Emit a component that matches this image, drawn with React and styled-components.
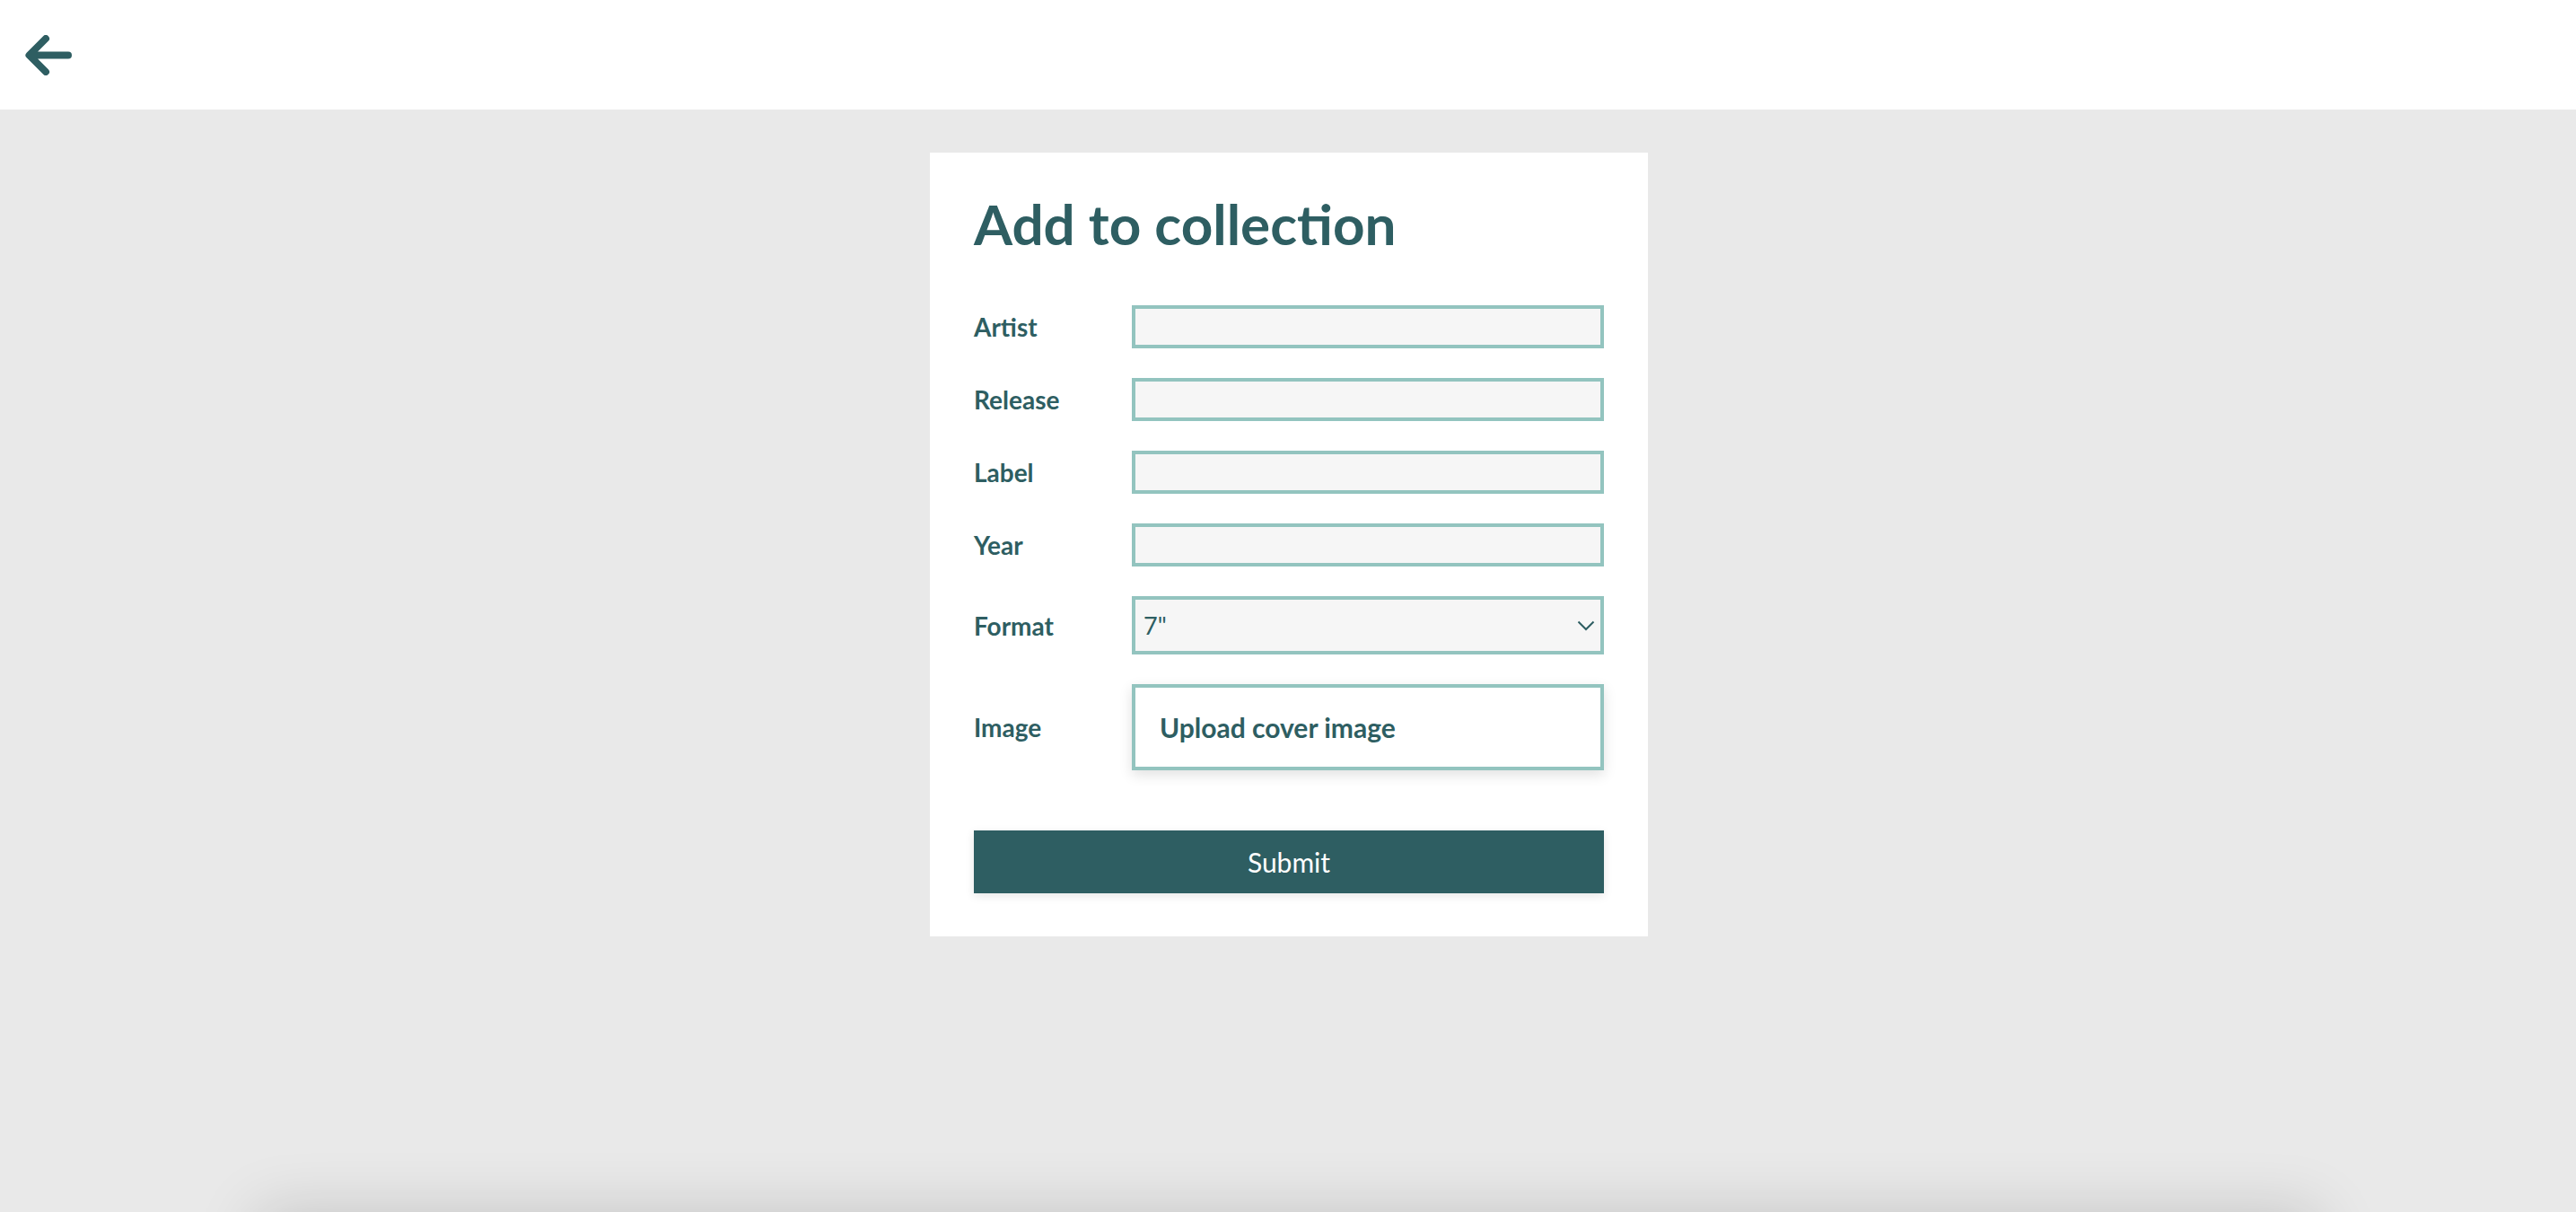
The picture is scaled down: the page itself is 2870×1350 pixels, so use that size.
import React from 'react';
import styled, { createGlobalStyle } from 'styled-components';

const teal = '#2e5e62';
const mint = '#93c4bf';

const GlobalStyle = createGlobalStyle`
  html, body {
    margin: 0;
    padding: 0;
    background: #e9e9e9;
    font-family: Lato, "Open Sans", sans-serif;
    color: ${teal};
  }
  * {
    box-sizing: border-box;
  }
`;

const Header = styled.header`
  height: 122px;
  background: #ffffff;
  display: flex;
  align-items: center;
  padding-left: 28px;
`;

const BackButton = styled.button`
  border: none;
  background: none;
  padding: 0;
  display: flex;
  cursor: pointer;
`;

const Main = styled.main`
  min-height: calc(100vh - 122px);
  padding-top: 48px;
  display: flex;
  justify-content: center;
  align-items: flex-start;
`;

const Card = styled.section`
  width: 800px;
  margin-left: 2px;
  background: #ffffff;
  padding: 43px 49px 48px;
`;

const Title = styled.h1`
  margin: 0 0 55px;
  font-size: 62px;
  line-height: 72px;
  font-weight: 700;
`;

const Form = styled.form`
  display: flex;
  flex-direction: column;
  gap: 33px;
`;

const Row = styled.div`
  display: grid;
  grid-template-columns: 176px 1fr;
  align-items: center;
`;

const Label = styled.label`
  font-size: 28px;
  font-weight: 700;
`;

const Input = styled.input`
  height: 48px;
  width: 100%;
  border: 4px solid ${mint};
  background: #f6f6f6;
  font: inherit;
  font-size: 26px;
  color: ${teal};
  padding: 0 10px;
  outline: none;
`;

const SelectWrap = styled.div`
  position: relative;
`;

const Select = styled.select`
  appearance: none;
  height: 65px;
  width: 100%;
  border: 4px solid ${mint};
  border-radius: 0;
  background: #f6f6f6;
  font-family: inherit;
  font-size: 27px;
  color: ${teal};
  padding: 0 9px;
  outline: none;
`;

const Chevron = styled.svg`
  position: absolute;
  right: 10px;
  top: 50%;
  transform: translateY(-50%);
  pointer-events: none;
`;

const Upload = styled.label`
  height: 96px;
  display: flex;
  align-items: center;
  border: 4px solid ${mint};
  background: #ffffff;
  padding: 0 27px;
  font-size: 30px;
  font-weight: 700;
  box-shadow: 0 5px 14px rgba(0, 0, 0, 0.12);
  cursor: pointer;

  input {
    display: none;
  }
`;

const Submit = styled.button`
  margin-top: 34px;
  height: 70px;
  width: 100%;
  border: none;
  background: ${teal};
  color: #ffffff;
  font-family: inherit;
  font-size: 30px;
  font-weight: 400;
  box-shadow: 0 3px 10px rgba(0, 0, 0, 0.1);
  cursor: pointer;
`;

const Footer = styled.footer`
  width: 80%;
  height: 140px;
  margin: 0 auto;
  background: #e9e9e9;
  box-shadow: 0 0 70px rgba(0, 0, 0, 0.16);
`;

const fields = ['Artist', 'Release', 'Label', 'Year'];

const App = () => (
  <>
    <GlobalStyle />
    <Header>
      <BackButton aria-label="Back">
        <svg width="52" height="45" viewBox="0 0 52 45" fill="none">
          <path
            d="M48 22.5H5M23 4L4.5 22.5L23 41"
            stroke={teal}
            strokeWidth="8"
            strokeLinecap="round"
            strokeLinejoin="round"
          />
        </svg>
      </BackButton>
    </Header>
    <Main>
      <Card>
        <Title>Add to collection</Title>
        <Form onSubmit={e => e.preventDefault()}>
          {fields.map(name => (
            <Row key={name}>
              <Label htmlFor={name.toLowerCase()}>{name}</Label>
              <Input id={name.toLowerCase()} type="text" />
            </Row>
          ))}
          <Row>
            <Label htmlFor="format">Format</Label>
            <SelectWrap>
              <Select id="format" defaultValue='7"'>
                <option>7"</option>
                <option>10"</option>
                <option>12"</option>
                <option>LP</option>
              </Select>
              <Chevron width="20" height="12" viewBox="0 0 20 12" fill="none">
                <path d="M1.5 1.5L10 10L18.5 1.5" stroke={teal} strokeWidth="2" />
              </Chevron>
            </SelectWrap>
          </Row>
          <Row>
            <Label as="span">Image</Label>
            <Upload>
              Upload cover image
              <input type="file" accept="image/*" />
            </Upload>
          </Row>
          <Submit type="submit">Submit</Submit>
        </Form>
      </Card>
    </Main>
    <Footer />
  </>
);

export default App;
